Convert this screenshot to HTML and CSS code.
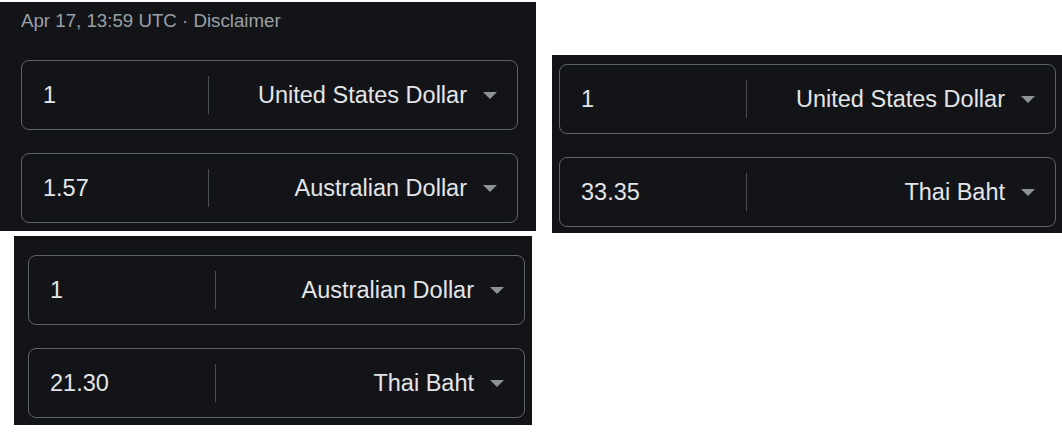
FILE: index.html
```html
<!DOCTYPE html>
<html>
<head>
<meta charset="utf-8">
<link rel="stylesheet" href="styles.css">
</head>
<body>
<div class="collage">
  <div class="col-left">
    <section class="panel panel-a">
      <div class="stamp">Apr 17, 13:59 UTC · Disclaimer</div>
      <div class="box">
        <div class="amount">1</div>
        <div class="divider"></div>
        <div class="cur"><span>United States Dollar</span><svg class="arrow" viewBox="0 0 14 7"><path d="M0 0H14L7 7Z"/></svg></div>
      </div>
      <div class="box gap">
        <div class="amount">1.57</div>
        <div class="divider"></div>
        <div class="cur"><span>Australian Dollar</span><svg class="arrow" viewBox="0 0 14 7"><path d="M0 0H14L7 7Z"/></svg></div>
      </div>
    </section>
    <section class="panel panel-c">
      <div class="box">
        <div class="amount">1</div>
        <div class="divider"></div>
        <div class="cur"><span>Australian Dollar</span><svg class="arrow" viewBox="0 0 14 7"><path d="M0 0H14L7 7Z"/></svg></div>
      </div>
      <div class="box gap">
        <div class="amount">21.30</div>
        <div class="divider"></div>
        <div class="cur"><span>Thai Baht</span><svg class="arrow" viewBox="0 0 14 7"><path d="M0 0H14L7 7Z"/></svg></div>
      </div>
    </section>
  </div>
  <section class="panel panel-b">
    <div class="box">
      <div class="amount">1</div>
      <div class="divider"></div>
      <div class="cur"><span>United States Dollar</span><svg class="arrow" viewBox="0 0 14 7"><path d="M0 0H14L7 7Z"/></svg></div>
    </div>
    <div class="box gap">
      <div class="amount">33.35</div>
      <div class="divider"></div>
      <div class="cur"><span>Thai Baht</span><svg class="arrow" viewBox="0 0 14 7"><path d="M0 0H14L7 7Z"/></svg></div>
    </div>
  </section>
</div>
</body>
</html>
```

FILE: styles.css
```css
html, body {
  margin: 0;
  padding: 0;
  background: #ffffff;
}
body {
  font-family: "Liberation Sans", Arial, sans-serif;
}
.collage {
  display: flex;
  align-items: flex-start;
}
.col-left {
  display: flex;
  flex-direction: column;
  width: 536px;
}
.panel {
  background: #131418;
  box-sizing: border-box;
}
.panel-a {
  margin-top: 2px;
  width: 536px;
  height: 229px;
  padding: 0 18px 0 21px;
}
.panel-c {
  margin: 5px 0 0 14px;
  width: 518px;
  height: 189px;
  padding: 19px 7px 0 14px;
}
.panel-b {
  margin: 55px 0 0 16px;
  width: 510px;
  height: 178px;
  padding: 9px 6px 0 7px;
}
.stamp {
  padding-top: 8px;
  line-height: 22px;
  font-size: 18.7px;
  color: #9aa0a6;
  margin-bottom: 28px;
}
.box {
  display: flex;
  align-items: center;
  width: 497px;
  height: 70px;
  box-sizing: border-box;
  border: 1px solid #5f6368;
  border-radius: 8px;
  color: #e3e5e8;
  font-size: 23.5px;
}
.box.gap {
  margin-top: 23px;
}
.amount {
  flex: 0 0 186px;
  box-sizing: border-box;
  padding-left: 21px;
}
.divider {
  width: 1px;
  height: 38px;
  background: #4a4d52;
}
.cur {
  flex: 1;
  display: flex;
  justify-content: flex-end;
  align-items: center;
  gap: 16px;
  padding-right: 20px;
}
.arrow {
  width: 14px;
  height: 7px;
  fill: #8e9297;
}
```
